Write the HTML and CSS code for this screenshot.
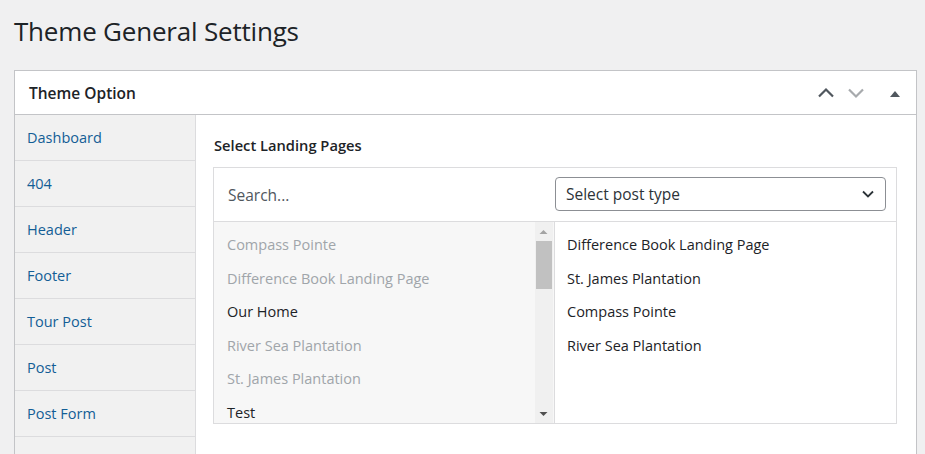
FILE: index.html
```html
<!DOCTYPE html>
<html>
<head>
<meta charset="utf-8">
<link rel="stylesheet" href="styles.css">
</head>
<body>
<div class="wrap">
  <h1 class="page-title">Theme General Settings</h1>
  <div class="panel">
    <div class="panel-header">
      <h2 class="panel-title">Theme Option</h2>
      <div class="panel-actions">
        <svg class="icon" width="20" height="20" viewBox="0 0 20 20"><path d="M3 13.5 L10 6.5 L17 13.5" fill="none" stroke="#50575e" stroke-width="2.2"/></svg>
        <svg class="icon" width="20" height="20" viewBox="0 0 20 20"><path d="M3 6.5 L10 13.5 L17 6.5" fill="none" stroke="#a7aaad" stroke-width="2.2"/></svg>
        <svg class="icon tri" width="20" height="20" viewBox="0 0 20 20"><path d="M5 14 L10 8 L15 14 Z" fill="#50575e"/></svg>
      </div>
    </div>
    <div class="panel-body">
      <ul class="side-nav">
        <li><a>Dashboard</a></li>
        <li><a>404</a></li>
        <li><a>Header</a></li>
        <li><a>Footer</a></li>
        <li><a>Tour Post</a></li>
        <li><a>Post</a></li>
        <li><a>Post Form</a></li>
        <li><a>&nbsp;</a></li>
      </ul>
      <div class="content">
        <div class="field-label">Select Landing Pages</div>
        <div class="picker">
          <div class="picker-top">
            <div class="search">Search...</div>
            <div class="select-wrap">
              <div class="select">
                <span>Select post type</span>
                <svg width="14" height="14" viewBox="0 0 14 14"><path d="M2 4.5 L7 9.5 L12 4.5" fill="none" stroke="#2c3338" stroke-width="1.8"/></svg>
              </div>
            </div>
          </div>
          <div class="picker-lists">
            <div class="choices">
              <ul class="choice-list">
                <li class="disabled">Compass Pointe</li>
                <li class="disabled">Difference Book Landing Page</li>
                <li>Our Home</li>
                <li class="disabled">River Sea Plantation</li>
                <li class="disabled">St. James Plantation</li>
                <li>Test</li>
              </ul>
              <div class="scrollbar">
                <svg class="arrow" width="17" height="10" viewBox="0 0 17 10"><path d="M4.5 7 L8.5 3 L12.5 7 Z" fill="#a3a3a3"/></svg>
                <div class="track"><div class="thumb"></div></div>
                <svg class="arrow" width="17" height="10" viewBox="0 0 17 10"><path d="M4.5 3 L8.5 7 L12.5 3 Z" fill="#505050"/></svg>
              </div>
            </div>
            <ul class="values">
              <li>Difference Book Landing Page</li>
              <li>St. James Plantation</li>
              <li>Compass Pointe</li>
              <li>River Sea Plantation</li>
            </ul>
          </div>
        </div>
      </div>
    </div>
  </div>
</div>
</body>
</html>
```
FILE: styles.css
```css
html, body {
  margin: 0;
  padding: 0;
  height: 100%;
  overflow: hidden;
}
body {
  background: #f0f0f1;
  font-family: "Open Sans", "Noto Sans", sans-serif;
  color: #1d2327;
}
.wrap {
  padding: 0 8px 0 14px;
}
.page-title {
  margin: 0;
  padding: 13px 0 0;
  font-size: 26px;
  font-weight: 400;
  line-height: 36px;
  height: 57px;
  color: #1d2327;
  letter-spacing: -0.2px;
}
.panel {
  background: #fff;
  border: 1px solid #c3c4c7;
  border-bottom: none;
}
.panel-header {
  height: 43px;
  border-bottom: 1px solid #c3c4c7;
  display: flex;
  align-items: center;
  justify-content: space-between;
  padding: 0 11px 0 14px;
}
.panel-title {
  margin: 0;
  font-size: 15.5px;
  font-weight: 600;
  color: #1d2327;
}
.panel-actions {
  display: flex;
  align-items: center;
  gap: 10px;
}
.panel-actions .tri {
  margin-left: 9px;
}
.icon {
  display: block;
}
.panel-body {
  display: flex;
  height: 339px;
  overflow: hidden;
}
.side-nav {
  list-style: none;
  margin: 0;
  padding: 0;
  width: 180px;
  background: #f1f1f1;
  border-right: 1px solid #dcdcde;
  flex: none;
  overflow: hidden;
}
.side-nav li {
  height: 45px;
  border-bottom: 1px solid #dcdcde;
  display: flex;
  align-items: center;
  padding-left: 12px;
}
.side-nav a {
  color: #135e96;
  font-size: 14.5px;
  text-decoration: none;
}
.content {
  flex: 1;
  padding: 20px 19px 0 18px;
}
.field-label {
  font-size: 14.7px;
  font-weight: 600;
  line-height: 20px;
  margin-bottom: 12px;
  color: #1d2327;
}
.picker {
  border: 1px solid #dcdcde;
  margin-left: -1px;
}
.picker-top {
  display: flex;
  height: 53px;
  border-bottom: 1px solid #dcdcde;
}
.search {
  width: 341px;
  flex: none;
  display: flex;
  align-items: center;
  padding-left: 14px;
  box-sizing: border-box;
  font-size: 15.5px;
  color: #50575e;
}
.select-wrap {
  flex: 1;
  padding: 9px 10px 0 0;
}
.select {
  height: 32px;
  border: 1px solid #8c8f94;
  border-radius: 4px;
  display: flex;
  align-items: center;
  justify-content: space-between;
  padding: 0 10px 0 10px;
  font-size: 15.5px;
  color: #2c3338;
}
.picker-lists {
  display: flex;
  height: 201px;
}
.choices {
  width: 341px;
  flex: none;
  display: flex;
  background: #f7f7f7;
  border-right: 1px solid #dcdcde;
  box-sizing: border-box;
}
.choice-list, .values {
  list-style: none;
  margin: 0;
  padding: 6px 0 0;
  overflow: hidden;
}
.choice-list {
  flex: 1;
}
.choice-list li, .values li {
  height: 33.5px;
  line-height: 33.5px;
  font-size: 14.5px;
  padding-left: 13px;
  color: #1d2327;
  white-space: nowrap;
}
.choice-list li.disabled {
  color: #a0a5aa;
}
.values {
  flex: 1;
  background: #fff;
}
.values li {
  padding-left: 12px;
}
.scrollbar {
  width: 18px;
  flex: none;
  background: #f0f0f0;
  display: flex;
  flex-direction: column;
  margin-right: 1px;
}
.arrow {
  display: block;
  flex: none;
  margin: 5px 0 4px;
}
.track {
  flex: 1;
  padding: 0 1px;
}
.thumb {
  height: 48px;
  background: #c1c1c1;
}
```
